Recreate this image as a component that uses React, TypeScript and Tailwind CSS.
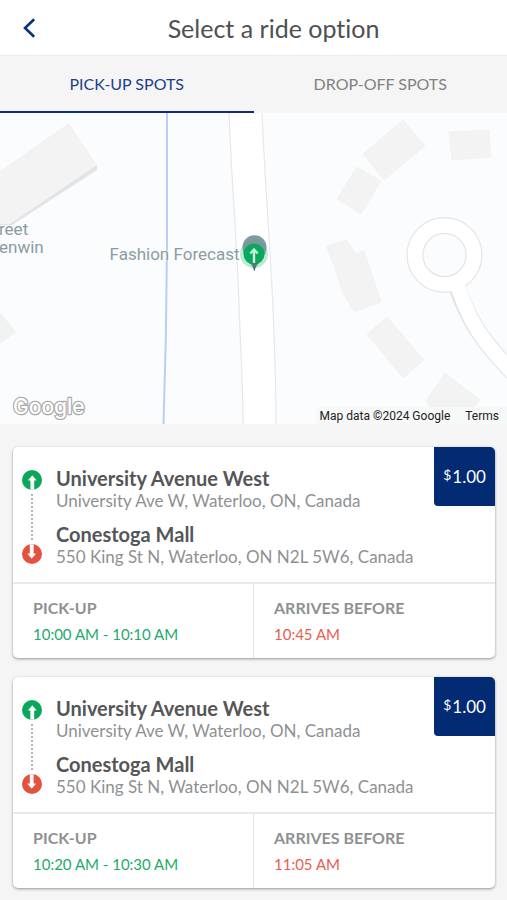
import { useState } from "react";

type Ride = {
  id: number;
  price: string;
  pickup: string;
  arrival: string;
};

const rides: Ride[] = [
  { id: 1, price: "1.00", pickup: "10:00 AM - 10:10 AM", arrival: "10:45 AM" },
  { id: 2, price: "1.00", pickup: "10:20 AM - 10:30 AM", arrival: "11:05 AM" },
];

const tabs = ["PICK-UP SPOTS", "DROP-OFF SPOTS"];

function Header() {
  return (
    <header className="flex h-[55px] items-center bg-white">
      <button type="button" aria-label="Back" className="flex h-full w-10 items-center justify-end pr-1">
        <svg width="14" height="20" viewBox="0 0 14 20" fill="none" stroke="#0b2f7d" strokeWidth="2.6">
          <path d="M12.2 1.2 3 10l9.2 8.8" />
        </svg>
      </button>
      <h1 className="flex-1 text-center text-[25px] leading-8 text-[#4e5052]">Select a ride option</h1>
    </header>
  );
}

function Tabs() {
  const [active, setActive] = useState(0);
  return (
    <div role="tablist" className="grid grid-cols-2 border-t border-[#ececec]">
      {tabs.map((label, i) => (
        <button
          key={label}
          type="button"
          role="tab"
          aria-selected={i === active}
          onClick={() => setActive(i)}
          className={
            i === active
              ? "h-[57px] border-b-2 border-[#0b2f7d] text-base text-[#1c3f8b]"
              : "h-[57px] border-b-2 border-transparent text-base text-[#808284]"
          }
        >
          {label}
        </button>
      ))}
    </div>
  );
}

function MapView() {
  return (
    <section aria-label="Map" className="relative h-[311px] overflow-hidden bg-[#fafcfd]">
      <svg className="h-full w-full" viewBox="0 0 507 311" preserveAspectRatio="xMidYMid slice">
        {/* creek */}
        <path d="M167 0V110Q167 210 163.500 311" fill="none" stroke="#b5cff8" strokeWidth="2" />
        {/* avenue */}
        <path d="M229 -2C231 60 237 130 239 190S243 270 243 313H276C276 250 273 190 270 140S264 50 262 -2Z" fill="#fff" stroke="#e6e7e8" strokeWidth="1.200" />
        {/* buildings */}
        <path d="M97 52V57L12 112L0 112V100Z" fill="#e2e3e6" />
        <path d="M0 58 69 10 97 52 10 111H0Z" fill="#f3f3f3" />
        <path d="M0 199 16 219 0 231Z" fill="#f1f2f2" />
        <g fill="#f3f3f3" stroke="#eff0f0" strokeWidth=".6">
          <path d="M403 7 425 33 384 67 363 41Z" />
          <path d="M357 54 381 68 361 101 337 86Z" />
          <path d="M449 19 489 17 491 44 452 47Z" />
          <path d="M326 133 347 127 356 141 364 138 371 158 381 189 354 199 347 187 343 180 334 153Z" />
          <path d="M387 204 424 247 403 265 367 221Z" />
          <path d="M445 260 480 287 474 294H430L426 288Z" />
        </g>
        {/* cul-de-sac */}
        <path d="M456 172C468 205 478 224 515 262" fill="none" stroke="#e4e5e6" strokeWidth="17" />
        <circle cx="444.500" cy="142" r="29.500" fill="none" stroke="#e4e5e6" strokeWidth="17" />
        <path d="M456 168C468 205 478 224 515 262" fill="none" stroke="#fff" strokeWidth="14.600" />
        <circle cx="444.500" cy="142" r="29.500" fill="none" stroke="#fff" strokeWidth="14.600" />
      </svg>

      <p className="absolute top-[107px] left-[-1px] font-['Roboto',sans-serif] text-[17px] leading-[18px] text-[#8a9ba2]">
        reet
        <br />
        enwin
      </p>
      <p className="absolute top-[131px] right-[calc(50%+14px)] font-['Roboto',sans-serif] text-[17px] leading-5 whitespace-nowrap text-[#8a9ba2] [text-shadow:0_0_2px_#fff,0_0_2px_#fff]">
        Fashion Forecast
      </p>

      <svg className="absolute top-[120px] left-1/2 -translate-x-1/2" width="32" height="40" viewBox="0 0 32 40">
        <circle cx="16" cy="21" r="14" fill="#a6e3c4" opacity=".75" />
        <path d="M16 38C15 31 4.500 25 4.500 14a12 11.800 0 0 1 24 0C28.500 25 17.500 31 16.800 38Z" fill="#6f9096" opacity=".9" />
        <circle cx="16" cy="21" r="10.500" fill="#0aa85c" />
        <path d="M13.500 28 16.300 38 19.500 28Z" fill="#43806c" />
        <path d="M16 30V17M12.300 20.500 16 16.500 19.700 20.500" fill="none" stroke="#c5f2d9" strokeWidth="2.400" />
      </svg>

      <svg className="absolute bottom-0 left-2" width="84" height="34" role="img" aria-label="Google">
        <text
          x="5"
          y="24"
          fill="#fff"
          stroke="#a9a9a9"
          strokeWidth="2.400"
          strokeLinejoin="round"
          paintOrder="stroke"
          className="font-['Inter',sans-serif] text-[21px] font-medium"
        >
          Google
        </text>
      </svg>

      <div className="absolute right-0 bottom-0 flex h-[17px] items-center gap-[15px] bg-[#f7f8f8] pr-2 pl-1 font-['Roboto',sans-serif] text-xs text-[#222]">
        <span>Map data ©2024 Google</span>
        <a href="#terms">Terms</a>
      </div>
    </section>
  );
}

function StopIcon({ up }: { up: boolean }) {
  return (
    <svg width="20" height="20" viewBox="0 0 20 20" className="shrink-0">
      <circle cx="10" cy="10" r="10" fill={up ? "#0aa65c" : "#e2523f"} />
      <g transform={up ? undefined : "rotate(180 10 10)"}>
        <path d="M10.300 5.600 14.300 10.200H12V19.600H8.600V10.200H6.300Z" fill="#fff" stroke="#fff" strokeWidth=".4" strokeLinejoin="round" />
      </g>
    </svg>
  );
}

function Stop({ name, address }: { name: string; address: string }) {
  return (
    <div>
      <h2 className="text-xl leading-[23px] font-bold text-[#545658]">{name}</h2>
      <p className="text-[17px] leading-[22px] text-[#8e9192]">{address}</p>
    </div>
  );
}

function RideCard({ ride }: { ride: Ride }) {
  return (
    <li className="overflow-hidden rounded-[5px] bg-white shadow-[0_1px_3px_rgba(0,0,0,0.4)]">
      <div className="flex">
        <div className="flex w-[43px] flex-col items-center pt-[23px] pr-1.5 pb-[18px]">
          <StopIcon up />
          <span className="my-1 flex-1 border-l-2 border-dotted border-[#b4b6b8]" />
          <StopIcon up={false} />
        </div>
        <div className="flex min-w-0 flex-1 flex-col gap-[11px] pt-5 pb-3.5">
          <Stop name="University Avenue West" address="University Ave W, Waterloo, ON, Canada" />
          <Stop name="Conestoga Mall" address="550 King St N, Waterloo, ON N2L 5W6, Canada" />
        </div>
        <p className="flex h-[59px] w-[61px] items-center justify-center gap-px rounded-bl-sm bg-[#032b73] text-[17px] text-white">
          <span className="pb-1 text-sm">$</span>
          {ride.price}
        </p>
      </div>
      <dl className="grid grid-cols-2 border-t-2 border-[#e8e9e9] text-base leading-[26px]">
        <div className="border-r border-[#e2e3e3] pt-[11px] pb-[11px] pl-5">
          <dt className="font-bold text-[#8e9192]">PICK-UP</dt>
          <dd className="text-[15px] text-[#1dab6b]">{ride.pickup}</dd>
        </div>
        <div className="pt-[11px] pb-[11px] pl-5">
          <dt className="font-bold text-[#8e9192]">ARRIVES BEFORE</dt>
          <dd className="text-[15px] text-[#ea5d50]">{ride.arrival}</dd>
        </div>
      </dl>
    </li>
  );
}

export default function App() {
  return (
    <main className="min-h-screen bg-[#f5f5f5] font-['Lato',sans-serif] [font-variant-ligatures:none]">
      <Header />
      <Tabs />
      <MapView />
      <ul className="flex flex-col gap-[19px] pt-[23px] pr-3 pb-3 pl-[13px]">
        {rides.map((ride) => (
          <RideCard key={ride.id} ride={ride} />
        ))}
      </ul>
    </main>
  );
}
